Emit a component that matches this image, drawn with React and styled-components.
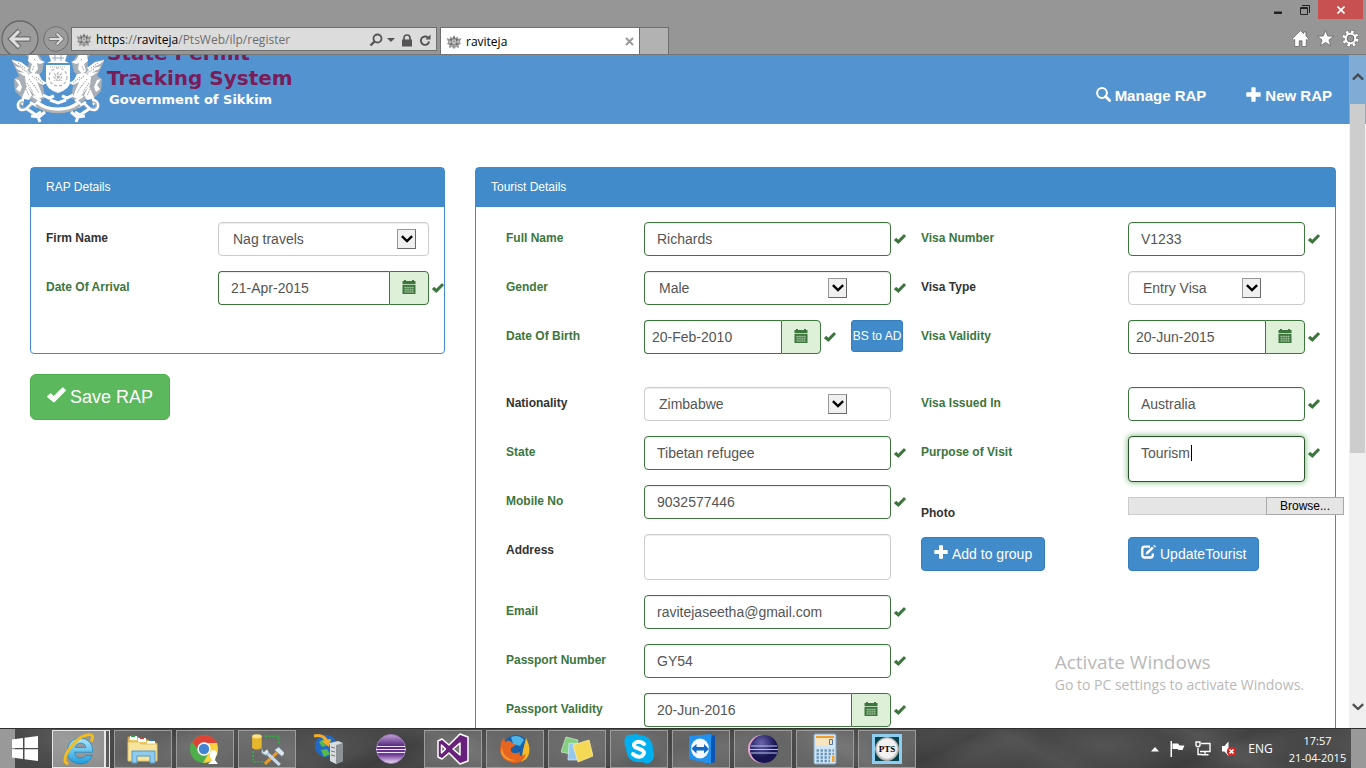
import React from "react";
import styled, { createGlobalStyle, css } from "styled-components";

const GREEN = "#3c763d";
const BLUE = "#428bca";
const sans = '"Liberation Sans", Arial, sans-serif';
const ui = '"Open Sans", "Noto Sans", sans-serif';

const GlobalStyle = createGlobalStyle`
  *, *::before, *::after { box-sizing: border-box; }
  body { margin: 0; font: 14px/20px ${sans}; color: #333; background: #fff; overflow: hidden; }
  button, input, select, textarea { font: inherit; color: inherit; margin: 0; }
  svg { display: block; flex: none; }
`;

const Desktop = styled.div`
  position: relative;
  display: flex;
  flex-direction: column;
  height: 100vh;
`;

/* ---------- browser frame ---------- */

const Chrome = styled.header`
  background: #969696;
  border-bottom: 1px solid #777;
  font: 12px/16px ${ui};
  color: #000;
`;

const TitleBar = styled.div`
  display: flex;
  justify-content: flex-end;
  height: 20px;
  padding-right: 3px;
`;

const WindowButton = styled.button`
  display: flex;
  align-items: center;
  justify-content: center;
  width: ${(p) => (p.$close ? 45 : 27)}px;
  height: 19px;
  padding: 0;
  border: 0;
  background: ${(p) => (p.$close ? "#c75050" : "transparent")};
`;

const Toolbar = styled.div`
  display: flex;
  height: 34px;
  overflow: hidden;
`;

const NavButtons = styled.div`
  display: flex;
  gap: 4px;
  flex: none;
  width: 71px;
  padding-left: 1px;
`;

const PlainButton = styled.button`
  display: flex;
  align-items: center;
  justify-content: center;
  flex: none;
  height: ${(p) => p.$h || 16}px;
  padding: 0;
  border: 0;
  background: none;
`;

const AddressBar = styled.div`
  display: flex;
  align-items: center;
  gap: 4px;
  flex: 0 1 366px;
  height: 24px;
  margin-top: 7px;
  padding: 2px 5px 0 4px;
  background: #dcdcdc;
  border: 1px solid #6e6e6e;
`;

const Url = styled.span`
  flex: 1;
  white-space: nowrap;
  color: #6d6d6d;
  b { font-weight: 400; color: #000; }
`;

const Tab = styled.div`
  display: flex;
  align-items: center;
  gap: 4px;
  flex: 0 1 200px;
  height: 27px;
  margin: 7px 0 0 3px;
  padding: 1px 5px 0;
  background: #fff;
  border: 1px solid #6e6e6e;
  border-bottom: 0;
  span { flex: 1; }
`;

const NewTab = styled.button`
  width: 29px;
  height: 27px;
  margin-top: 7px;
  border: 1px solid #6e6e6e;
  border-width: 1px 1px 0 0;
  background: #b2b2b2;
`;

const Tools = styled.div`
  display: flex;
  align-items: center;
  gap: 8px;
  margin-left: auto;
  padding: 3px 7px 0 0;
`;

/* ---------- web page ---------- */

const Viewport = styled.div`
  flex: 1;
  min-height: 0;
  display: flex;
`;

const Page = styled.div`
  flex: 1;
  min-width: 0;
  overflow: hidden;
`;

const SiteHeader = styled.div`
  display: flex;
  align-items: flex-end;
  height: 69px;
  padding: 0 17px 0 12px;
  overflow: hidden;
  background: #5394d0;
  color: #fff;
`;

const Brand = styled.div`
  display: flex;
  align-items: flex-end;
  gap: 3px;
  flex: 1;
`;

const BrandText = styled.div`
  padding-bottom: 15px;
  font-family: "DejaVu Sans", Verdana, sans-serif;
  font-weight: 700;
`;

const BrandTitle = styled.div`
  width: 210px;
  font-size: 20px;
  line-height: 25px;
  color: #7a1c59;
`;

const BrandSub = styled.div`
  padding-left: 2px;
  font-size: 13px;
  line-height: 18px;
`;

const SiteNav = styled.nav`
  display: flex;
  gap: 40px;
  padding-bottom: 18px;
`;

const NavLink = styled.a`
  display: flex;
  align-items: center;
  gap: 4px;
  font-size: 15px;
  line-height: 20px;
  font-weight: 700;
  color: #fff;
  text-decoration: none;
  svg { margin-bottom: 4px; }
`;

const Columns = styled.main`
  display: grid;
  grid-template-columns: 415fr 861fr;
  gap: 30px;
  align-items: start;
  padding: 43px 13px 0 30px;
`;

const Panel = styled.section`
  border: 1px solid ${BLUE};
  border-radius: 4px;
  background: #fff;
`;

const PanelTitle = styled.h2`
  margin: 0;
  padding: 9px 15px 10px;
  font-size: 12px;
  line-height: 20px;
  font-weight: 400;
  color: #fff;
  background: ${BLUE};
`;

const Fields = styled.div`
  display: flex;
  flex-direction: column;
  gap: 15px;
  min-width: 0;
`;

const RapBody = styled.div`
  min-height: 146px;
  padding: 15px 0 15px 15px;
`;

const TouristBody = styled.div`
  display: grid;
  grid-template-columns: 400fr 399fr;
  gap: 15px;
  padding: 15px 15px 40px 30px;
`;

const Row = styled.div`
  display: grid;
  grid-template-columns: ${(p) => p.$cols};
  align-items: start;
  min-height: ${(p) => p.$min || 34}px;
`;

const Label = styled.label`
  padding-top: 8px;
  font-size: 12px;
  line-height: 17px;
  font-weight: 700;
  color: ${(p) => (p.$ok ? GREEN : "#333")};
`;

const box = css`
  width: 100%;
  border: 1px solid ${(p) => (p.$ok ? GREEN : "#ccc")};
  border-radius: 4px;
  background: #fff;
  box-shadow: inset 0 1px 1px rgba(0, 0, 0, 0.075);
  color: #555;
  font-size: 14px;
  line-height: 20px;
  outline: 0;
`;

const Input = styled.input`
  ${box}
  height: 34px;
  padding: 6px 12px;
`;

const TextArea = styled.textarea`
  ${box}
  display: block;
  height: 46px;
  padding: 6px 12px;
  resize: none;
  overflow: hidden;
  ${(p) =>
    p.$active &&
    css`
      border-color: #2b542c;
      box-shadow: inset 0 1px 1px rgba(0, 0, 0, 0.075), 0 0 6px #67b168;
    `}
`;

const Over = styled.div`
  position: relative;
`;

const Caret = styled.i`
  position: absolute;
  left: 63px;
  top: 9px;
  width: 1px;
  height: 16px;
  background: #000;
`;

const Select = styled.select`
  ${box}
  display: block;
  height: 34px;
  padding: 6px 14px;
  appearance: none;
`;

const Arrow = styled.span`
  position: absolute;
  top: 7px;
  right: ${(p) => p.$right}px;
  display: flex;
  justify-content: center;
  width: 19px;
  height: 20px;
  padding-top: 5px;
  background: #f0f0f0;
  border: 1px solid #999;
  border-right-color: #6a6a6a;
  border-bottom-color: #6a6a6a;
  pointer-events: none;
`;

const DateGroup = styled.div`
  display: flex;
  height: 34px;
`;

const DateInput = styled(Input)`
  flex: 1;
  min-width: 0;
  padding: 6px ${(p) => p.$pad}px;
  border-right: 0;
  border-radius: 4px 0 0 4px;
`;

const DateButton = styled.button`
  display: flex;
  align-items: center;
  justify-content: center;
  width: 40px;
  padding: 0 0 2px;
  border: 1px solid ${GREEN};
  border-radius: 0 4px 4px 0;
  background: #dff0d8;
`;

const Mark = styled.span`
  padding: 12px 0 0 3px;
`;

const Button = styled.button`
  display: inline-flex;
  align-items: center;
  justify-self: start;
  gap: 4px;
  height: 34px;
  padding: 0 12px;
  border: 1px solid #357ebd;
  border-radius: 4px;
  background: ${BLUE};
  color: #fff;
  font-size: 14px;
  line-height: 20px;
  white-space: nowrap;
  svg { margin-bottom: 4px; }
`;

const SmallButton = styled(Button)`
  justify-content: center;
  width: 52px;
  height: 32px;
  padding: 0;
  margin-left: 15px;
  font-size: 12px;
  border-radius: 3px;
`;

const SaveButton = styled(Button)`
  height: 46px;
  margin-top: 20px;
  padding: 0 16px;
  border-color: #4cae4c;
  border-radius: 6px;
  background: #5cb85c;
  font-size: 18px;
`;

const FilePicker = styled.label`
  display: flex;
  width: 216px;
  height: 18px;
  font-size: 12px;
  line-height: 16px;
  color: #000;
  input { position: absolute; width: 1px; height: 1px; opacity: 0; }
`;

const FileName = styled.span`
  flex: 1;
  background: #e5e5e5;
  border: 1px solid #ccc;
  border-right: 0;
`;

const FileBrowse = styled.span`
  width: 78px;
  text-align: center;
  background: #e5e5e5;
  border: 1px solid #a9a9a9;
`;

const Scrollbar = styled.div`
  display: flex;
  flex-direction: column;
  flex: none;
  width: 17px;
  background: linear-gradient(#80abd4 69px, #f0f0f0 69px);
`;

const ScrollButton = styled.button`
  display: flex;
  justify-content: center;
  align-items: center;
  flex: none;
  height: ${(p) => p.$h}px;
  padding: 0 0 ${(p) => p.$lift || 0}px;
  border: 0;
  background: none;
`;

const Thumb = styled.div`
  flex: 0 1 349px;
  margin: 0 1px auto;
  background: #cdcdcd;
`;

const Watermark = styled.div`
  position: absolute;
  right: 62px;
  bottom: 73px;
  font-family: ${ui};
  color: #b9b9b9;
  white-space: nowrap;
  div { font-size: 19px; line-height: 26px; }
  p { margin: 0; font-size: 14px; line-height: 20px; }
`;

/* ---------- taskbar ---------- */

const Taskbar = styled.footer`
  display: flex;
  align-items: center;
  gap: 4px;
  flex: none;
  height: 40px;
  color: #fff;
  font: 12px/17px ${ui};
  border-top: 1px solid #302e2f;
  background:
    linear-gradient(28deg, transparent 30%, rgba(255, 255, 255, 0.05) 46%, transparent 60%) 0 0 / 190px 40px,
    linear-gradient(155deg, transparent 38%, rgba(0, 0, 0, 0.14) 50%, transparent 62%) 0 0 / 270px 40px,
    radial-gradient(ellipse at 50% 40%, rgba(255, 255, 255, 0.07), transparent 70%) 0 0 / 130px 40px,
    #474747;
`;

const Start = styled.button`
  width: 48px;
  height: 39px;
  padding: 0 0 0 12px;
  border: 0;
  background: linear-gradient(90deg, #999 15px, transparent 15px);
`;

const Task = styled.button`
  display: flex;
  align-items: center;
  justify-content: center;
  flex: 0 1 58px;
  height: 38px;
  padding: 0;
  border: 1px solid ${(p) => (p.$state === "none" ? "transparent" : "#9c9c9c")};
  background: ${(p) => (p.$state === "none" ? "none" : "rgba(255,255,255,0.17)")};
  ${(p) =>
    p.$state === "active" &&
    css`
      border-color: #e6e6e6;
      background: linear-gradient(90deg, transparent 51px, #e6e6e6 51px, #e6e6e6 53px, #5a5a5a 53px),
        rgba(255, 255, 255, 0.4);
      padding-right: 5px;
    `}
`;

const Tray = styled.div`
  display: flex;
  align-items: center;
  gap: 10px;
  height: 39px;
  margin-left: auto;
`;

const Clock = styled.time`
  width: 67px;
  font-size: 11px;
  text-align: center;
  white-space: nowrap;
  span { display: block; }
`;

const Language = styled.span`
  width: 27px;
  font-size: 12px;
  text-align: center;
`;

const ShowDesktop = styled.button`
  width: 15px;
  height: 39px;
  padding: 0;
  border: 0;
  background: #999;
  margin-left: -10px;
`;

/* ---------- drawings ---------- */

const Tick = ({ size = 12, color = GREEN }) => (
  <svg width={size} height={(size * 10) / 12} viewBox="0 0 12 10">
    <path fill={color} d="M0 5.9 2 4.100Q2.400 3.900 2.800 4.200L4.300 5.700 9.500.4Q10 0 10.400.4L11.800 1.700Q12.100 2.100 11.700 2.500L4.900 9.500Q4.400 10 3.900 9.500L.2 6.400Z" />
  </svg>
);

const Plus = ({ size = 14 }) => (
  <svg width={size} height={size} viewBox="0 0 14 14">
    <path fill="#fff" d="M5 .7Q5 .3 5.4.3H8.6Q9 .3 9 .7V5H13.3Q13.7 5 13.7 5.400V8.600Q13.7 9 13.3 9H9V13.300Q9 13.700 8.600 13.700H5.400Q5 13.700 5 13.300V9H.7Q.3 9 .3 8.600V5.400Q.3 5 .7 5H5Z" />
  </svg>
);

const SearchIcon = () => (
  <svg width="15" height="15" viewBox="0 0 15 15" fill="none" stroke="#fff">
    <circle cx="6" cy="6" r="4.900" strokeWidth="2" />
    <path d="m9.600 9.600 4 4" strokeWidth="2.800" strokeLinecap="round" />
  </svg>
);

const EditIcon = () => (
  <svg width="15" height="14" viewBox="0 0 15 14">
    <path d="M9 1.700H3.600Q1.300 1.700 1.300 4V10Q1.300 12.500 3.600 12.500H9.400Q11.800 12.500 11.800 10V8.500" fill="none" stroke="#fff" strokeWidth="2.300" />
    <path d="M5.300 7 11 1.500 12.900 3.300 7 9 4.600 9.700ZM12.100.5 13 0Q14.900.6 14.900 1.900L14 2.600Z" fill="#fff" />
  </svg>
);

const CalendarIcon = () => (
  <svg width="14" height="14" viewBox="0 0 14 14">
    <path fill={GREEN} d="M2 0H4V1H10V0H12V1H13.500V4.300H.5V1H2ZM.5 5H13.500V14H.5Z" />
    <path stroke="#dff0d8" strokeWidth=".7" d="M2 7.500H12M2 9.800H12M2 12H12M3.800 6.500V13M6 6.500V13M8.200 6.500V13M10.400 6.500V13" opacity=".6" />
  </svg>
);

const Chevron = ({ up, color = "#000", w = 11 }) => (
  <svg width={w} height={(w * 7) / 11} viewBox="0 0 11 7">
    <path d={up ? "M.8 6 5.5 1.5 10.2 6" : "M.8 1 5.5 5.5 10.2 1"} fill="none" stroke={color} strokeWidth="2.200" />
  </svg>
);

const Favicon = () => (
  <svg width="16" height="16" viewBox="0 0 16 16">
    <path fill="#959595" d="M8 1 9.500 4 12 2.500 12.200 5 15.500 4 13.700 8 15 10 12.500 11 13 14 10 13 8 15 6 13 3 14 3.500 11 1 10 2.300 8 .5 4 3.800 5 4 2.500 6.500 4Z" />
    <path fill="#d0d0d0" d="M6.300 5.800H9.700V8.500L8 10.300 6.300 8.500ZM3.400 6.700H4.600V9H3.400ZM11.500 6.700H12.600V9H11.500ZM5 11.500H7V12.300H5ZM9 11.500H11V12.300H9Z" />
    <path fill="#5e5e5e" d="M7.400 2.800H8.600V4.800H7.400ZM7.500 6.600H8.500V8.200H7.500ZM4.500 5H6V6.500H4.500ZM10 5H11.500V6.500H10ZM4.500 9.500H6V11H4.500ZM10 9.500H11.500V11H10Z" />
  </svg>
);

const Griffin = (props) => (
  <g {...props}>
    <path fill="#a9afb6" d="M-1 4 10 8 16 13 17 3 14 0H27L32 8 30 17 24 22 31 31 33 43 22 48 14 40 10 43 3 36 2 24 7 21Z" />
    <path fill="#fff" d="M-1 5 9 7 17 13 15 15 4 9ZM3 11 14 14 18 18 15 19 5 14ZM6 17 15 18 18 22 12 21ZM17 0 25 0 28 5 33 7 28 9 25 8 26 14 22 19 18 16 20 9 16 6ZM19 18 27 19 30 25 35 28 31 30 25 27 28 34 31 42 26 44 19 36 14 30 13 22ZM3 24 7 25 10 32 8 37 4 34 7 30ZM15 31 20 40 17 45 12 44 11 51 8 48 11 40Z" />
    <path fill="none" stroke="#9f9f9f" strokeWidth="1" strokeDasharray="1.500 1" d="M6 8 14 14M10 14 17 18M22 4 24 6M20 21 26 26M17 24 23 32M15 28 21 37M22 30 27 38M24 22 31 28M22 11 20 16M14 34 17 41" />
    <path fill="none" stroke="#a9afb6" strokeWidth="3.400" d="M12 46Q6 46 7 52Q9 56 15 53L21 48" />
    <path fill="none" stroke="#fff" strokeWidth="2.400" d="M12 45Q5 45 6 52Q8 57 14 54L20 48M18 47 26 52M21 41 29 46" />
  </g>
);

const Emblem = () => (
  <svg width="92" height="69" viewBox="0 0 92 69">
    <Griffin />
    <Griffin transform="translate(92 0) scale(-1 1)" />
    <path fill="#fff" d="M37 0H55L53 6 57 8H35L39 6Z" />
    <path d="M40 3H52M43 0V6M49 0V6" stroke="#93a9bf" />
    <path fill="#fff" d="M34 10H58V27Q58 34 46 38Q34 34 34 27Z" />
    <g fill="none" stroke="#b3b3b3" strokeWidth="1.200">
      <circle cx="46" cy="22" r="9" strokeDasharray="3 2" />
      <circle cx="46" cy="22" r="3.500" strokeDasharray="1.500 1.500" />
      <path d="M38 12H54M46 17V27M41 22H51M42 18 50 26M50 18 42 26" strokeDasharray="1 1" />
    </g>
    <path fill="none" stroke="#fff" strokeWidth="5" d="M24 47Q31 55 46 55T68 47" />
    <path fill="none" stroke="#b2b2b2" strokeWidth="2.400" d="M24 50Q32 57 46 57T68 50" />
    <path fill="none" stroke="#fff" strokeWidth="3" d="M31 40 37 43 42 41M61 40 55 43 50 41M15 54 24 60 29 57M77 54 68 60 63 57M38 45 46 48 54 45" />
    <path fill="none" stroke="#fff" strokeWidth="3" d="M33 57 27 62 19 61M26 62 28 67M59 57 65 62 73 61M66 62 64 67" />
  </svg>
);

const circleArrow = (r, flip) => (
  <svg width={r * 2 + 1} height={r * 2 + 1} viewBox="0 0 38 38" transform={flip ? "scale(-1 1)" : undefined}>
    <circle cx="19" cy="19" r="18" fill="#9c9c9c" stroke="#686868" strokeWidth="1.300" />
    <path d="M18.500 10.500 10 19 18.500 27.500M11 19H29.500" fill="none" stroke="#6c6c6c" strokeWidth="5.400" />
    <path d="M18 11 10 19 18 27M11 19H28.500" fill="none" stroke="#dedede" strokeWidth="3" />
  </svg>
);

const Icon = ({ children, size = 32 }) => (
  <svg width={size} height={size} viewBox="0 0 32 32">{children}</svg>
);

const taskIcons = [
  ["Internet Explorer", "active", (
    <Icon size={34}>
      <defs><linearGradient id="ie" x2="0" y2="1"><stop stopColor="#aee8fb" /><stop offset="1" stopColor="#209cdc" /></linearGradient></defs>
      <path fill="url(#ie)" stroke="#1685c4" strokeWidth=".7" d="M29 19H12Q12 24 17 24.5Q21 24.5 22.500 22H28.500Q25.500 30 17 30Q5 29 5 18Q6 6 17 6Q29 6 29 19ZM12.500 14.500H22.500Q22 10.500 17.500 10.500Q13 11 12.500 14.500Z" />
      <path fill="none" stroke="#f5bd1b" strokeWidth="2.700" d="M6 30Q0 29 5 19Q14 4 25 2.500Q31 2 27.500 9" />
    </Icon>
  )],
  ["File Explorer", "on", (
    <Icon>
      <path fill="#e8c765" stroke="#c49b39" d="M1 4H11L13 7H22L24 10H30V28H1Z" />
      <path fill="#fff" d="M3 3H10V7H3ZM11 5H19V9H11ZM20 8H28V11H20Z" />
      <path fill="#20a540" d="M4 2H8V4H4Z" /><path fill="#d63a2a" d="M13 4H17V6H13Z" /><path fill="#2876bd" d="M22 6H26V8H22Z" />
      <path fill="#f8e39c" stroke="#d8b75c" strokeWidth=".7" d="M1 9H12L14 11H30V28H1Z" />
      <path fill="#8fcbee" stroke="#5697c4" d="M5 18H28V30H23V23H10V30H5Z" />
    </Icon>
  )],
  ["Chrome", "on", (
    <Icon>
      <circle cx="15" cy="16" r="14" fill="#4fae4c" />
      <path fill="#dd4437" d="M3 9Q8 2 15 2Q24 2 28 10H15L9 16Z" />
      <path fill="#fdd23e" d="M28 10Q32 24 20 29L14 30 21 18 18 10Z" />
      <circle cx="15" cy="16" r="6.700" fill="#fff" /><circle cx="15" cy="16" r="5.200" fill="#4285d5" />
      <path fill="#fff" d="M21 20A3.500 3.500 0 1 1 27 23L26 27 29 31H19L23 27 21 24Z" />
    </Icon>
  )],
  ["Database Tools", "on", (
    <Icon size={34}>
      <path fill="#e6b72c" d="M2 4H11V15Q6 18 2 15Z" /><ellipse cx="6.500" cy="4" rx="4.500" ry="2" fill="#ffe283" />
      <path d="M14 4H27V12M3 18V28H13" fill="none" stroke="#28b53a" strokeWidth="1.500" strokeDasharray="2 1.500" />
      <path d="M14 30 27 18" stroke="#e79a2c" strokeWidth="3" /><path d="m14 18 14 13" stroke="#c7d9e8" strokeWidth="3" />
      <path fill="#dbe7f1" stroke="#6f879b" strokeWidth=".7" d="M23 17 27 14 33 20 30 23ZM11 15 13 19 16 16 18 19 15 22 11 20Z" />
    </Icon>
  )],
  ["Web Server", "none", (
    <Icon>
      <circle cx="13" cy="13" r="11" fill="#2269c7" />
      <path fill="#59b84b" d="M6 9 12 5 18 7 15 12 9 14ZM8 17 14 16 17 21 11 24ZM19 9 23 12 22 17 19 15Z" />
      <path fill="none" stroke="#f3ac2c" strokeWidth="3" d="M1 3Q11 1 14 9" /><path fill="#f3ac2c" d="m9 8 9-2-2 8Z" />
      <path fill="#d9dcdf" d="m17 10 8-2 5 2V28l-7 3-6-3Z" /><path fill="#8c9298" d="m23 12 7-2V28l-7 3Z" />
      <path stroke="#777" d="m18 14 4 1M18 18l4 1M18 22l4 1" />
    </Icon>
  )],
  ["Eclipse", "none", (
    <Icon>
      <defs><linearGradient id="ec" x2="0" y2="1"><stop stopColor="#c0a0da" /><stop offset=".4" stopColor="#542779" /><stop offset=".7" stopColor="#6f3c98" /><stop offset="1" stopColor="#f3e7fa" /></linearGradient></defs>
      <circle cx="16" cy="16" r="14.500" fill="url(#ec)" stroke="#9d7cb8" />
      <path stroke="#f0e4f8" strokeWidth="1" d="M2 13.500H30M1 16.500H31M2 19.500H30" />
    </Icon>
  )],
  ["Visual Studio", "on", (
    <Icon>
      <path fill="#68217a" fillRule="evenodd" stroke="#fff" strokeWidth="1.500" strokeLinejoin="round" d="M23 1 31 4V28L23 31 12 20 5 26 1 24V8L5 6 12 12ZM23 10 16 16 23 22ZM4.500 12V20L8.500 16Z" />
    </Icon>
  )],
  ["Firefox", "on", (
    <Icon>
      <circle cx="17" cy="15" r="13" fill="#1761a8" /><path fill="#4fb3e4" d="M12 4Q20 1 25 7L21 13 14 11Z" />
      <path fill="#f6b928" d="M27 5Q34 18 27 26L22 29 24 17Z" />
      <path fill="#e66520" d="M2 9 5 5 6 9Q11 6 13 10L17 12 12 15Q11 21 18 20L21 19Q19 26 27 21Q24 31 14 30Q2 28 1 17Z" />
      <path fill="#f89a2b" d="M3 13Q3 26 17 27Q7 30 2 20Z" />
    </Icon>
  )],
  ["Sticky Notes", "on", (
    <Icon>
      <path fill="#84ce80" stroke="#d4edd2" strokeWidth=".7" d="m5 4 12 3-3 15L0 19Z" />
      <path fill="#97c9ef" stroke="#d7eaf9" strokeWidth=".7" d="m8 10 14 1-2 16H7Z" />
      <path fill="#f5d956" stroke="#fff3b0" strokeWidth=".7" d="m12 12 16-5 4 16-15 6Z" />
    </Icon>
  )],
  ["Skype", "on", (
    <Icon>
      <path fill="#00aff0" d="M9 2Q12 0 16 2Q30 3 30 17Q33 24 28 29Q24 32 20 29Q4 31 3 15Q-1 6 5 2Q7 1 9 2Z" />
      <path fill="none" stroke="#fff" strokeWidth="4" strokeLinecap="round" d="M21 11Q18 8 14 9Q9 11 12 14L19 17Q23 20 19 23Q14 25 10 21" />
    </Icon>
  )],
  ["TeamViewer", "on", (
    <Icon>
      <path fill="#0b55b5" d="m27 3 3-1V29l-6 2-3-1Z" /><path fill="#2091ef" d="M4 3 26 1V31L4 26Z" />
      <ellipse cx="15" cy="15.500" rx="9" ry="10" fill="#f5f9fd" />
      <path fill="#1467c2" d="m6.500 15.500 5-4.500V14H19V11l5 5-5 4.500V17.500H11.500v3Z" />
    </Icon>
  )],
  ["Eclipse IDE", "on", (
    <Icon>
      <defs><radialGradient id="luna" cx=".4" cy=".3"><stop stopColor="#6b68b2" /><stop offset="1" stopColor="#181551" /></radialGradient></defs>
      <circle cx="15" cy="16" r="14" fill="#e5a5cf" /><circle cx="17" cy="16" r="14" fill="url(#luna)" />
      <path stroke="#b9c6ee" strokeWidth="1" d="M4 13H30M3 16.500H31M4 20H30" />
    </Icon>
  )],
  ["Calculator", "on", (
    <Icon>
      <rect x="5" y="1" width="22" height="30" rx="1.500" fill="#d2e5f5" stroke="#82a9cc" />
      <path fill="#f39c2a" d="M7 3H25V5H7Z" /><path fill="#f9e4c0" d="M7 5H25V13H7Z" />
      <path fill="none" stroke="#5475a0" d="M20.500 6.500H23.500V11.500H20.500Z" />
      <path stroke="#6893bb" strokeWidth="2.400" strokeDasharray="2.400 1.600" d="M7.500 17.500H25M7.500 21H25M7.500 24.500H21M7.500 28H21" />
      <path fill="#f0a334" d="M23 23H25.500V29H23Z" />
    </Icon>
  )],
  ["PTS", "on", (
    <Icon>
      <rect x="1" y="1" width="30" height="30" fill="#8ecdf0" /><rect x="4" y="4" width="24" height="24" fill="#06434f" />
      <circle cx="16" cy="16" r="11.500" fill="#c9c9c9" stroke="#a8a8a8" /><circle cx="16" cy="15.500" r="10" fill="#f2f2f2" />
      <text x="16" y="18.500" fontFamily="Liberation Serif, serif" fontWeight="700" fontSize="9" textAnchor="middle">PTS</text>
    </Icon>
  )],
];

/* ---------- form pieces ---------- */

const WIDE = "138fr 247fr 15px";
const NARROW = "207fr 177fr 15px";
const RAP = "172fr 211fr 15px";
const NARROW_OPEN = "minmax(0, 207fr) minmax(0, 192fr)";

const Field = ({ id, label, ok, cols, min, children }) => (
  <Row $cols={cols} $min={min}>
    <Label htmlFor={id} $ok={ok}>{label}</Label>
    {children}
    {ok && <Mark><Tick /></Mark>}
  </Row>
);

const TextField = ({ value, ...rest }) => (
  <Field {...rest} ok>
    <Input id={rest.id} defaultValue={value} $ok />
  </Field>
);

const SelectField = ({ value, inset = 44, ...rest }) => (
  <Field {...rest}>
    <Over>
      <Select id={rest.id} $ok={rest.ok}><option>{value}</option></Select>
      <Arrow $right={inset}><Chevron w={12} /></Arrow>
    </Over>
  </Field>
);

const DatePicker = ({ id, value, pad = 12 }) => (
  <DateGroup>
    <DateInput id={id} defaultValue={value} $ok $pad={pad} />
    <DateButton type="button" aria-label="Pick a date"><CalendarIcon /></DateButton>
  </DateGroup>
);

export default function App() {
  return (
    <Desktop>
      <GlobalStyle />
      <Chrome>
        <TitleBar>
          <WindowButton aria-label="Minimize"><svg width="10" height="12" viewBox="0 0 10 12"><path fill="#222" d="M1 7.500H9V10H1Z" /></svg></WindowButton>
          <WindowButton aria-label="Restore"><svg width="10" height="10" viewBox="0 0 10 10"><path fill="none" stroke="#222" d="M.5 2.500H7.500V9.500H.5ZM.5 3.500H7.500M2 .5H9.500V8" /></svg></WindowButton>
          <WindowButton $close aria-label="Close"><svg width="8" height="8" viewBox="0 0 8 8"><path stroke="#fff" strokeWidth="1.700" d="m.5.5 7 7M7.500.5l-7 7" /></svg></WindowButton>
        </TitleBar>
        <Toolbar>
          <NavButtons>
            <PlainButton $h={38} aria-label="Back">{circleArrow(18.5)}</PlainButton>
            <PlainButton $h={38} aria-label="Forward">{circleArrow(12.5, true)}</PlainButton>
          </NavButtons>
          <AddressBar>
            <Favicon />
            <Url><b>https</b>://<b>raviteja</b>/PtsWeb/ilp/register</Url>
            <PlainButton aria-label="Search"><svg width="14" height="14" viewBox="0 0 14 14" fill="none" stroke="#555"><circle cx="8.500" cy="5.500" r="4" strokeWidth="1.800" /><path strokeWidth="2.400" d="m5.500 8.500-4 4" /></svg></PlainButton>
            <PlainButton aria-label="Show more"><svg width="8" height="4" viewBox="0 0 8 4"><path fill="#555" d="M0 0H8L4 4Z" /></svg></PlainButton>
            <PlainButton aria-label="Security"><svg width="16" height="13" viewBox="0 0 16 13"><path fill="#555" d="M3 5.500H13V12.500H3Z" /><path d="M5 6V4Q5 1 8 1T11 4V6" fill="none" stroke="#555" strokeWidth="1.700" /></svg></PlainButton>
            <PlainButton aria-label="Refresh"><svg width="12" height="13" viewBox="0 0 12 13"><path d="M9 3.600A4.200 4.200 0 1 0 10.200 7.500" fill="none" stroke="#555" strokeWidth="1.900" /><path fill="#555" d="M6.500 5.500H11.500V.5Z" /></svg></PlainButton>
          </AddressBar>
          <Tab>
            <Favicon />
            <span>raviteja</span>
            <PlainButton aria-label="Close tab"><svg width="9" height="9" viewBox="0 0 9 9"><path stroke="#999" strokeWidth="2" d="m1 1 7 7M8 1 1 8" /></svg></PlainButton>
          </Tab>
          <NewTab aria-label="New tab" />
          <Tools>
            <PlainButton aria-label="Home"><svg width="17" height="17" viewBox="0 0 17 17"><path fill="#fff" stroke="#666" strokeWidth=".8" strokeLinejoin="round" d="M8.500.6 11.500 3.600V2H14V6L16.700 8.800 15.300 10.200 14.300 9.500V16.500H10V10.800H7.200V16.500H2.700V9.500L1.700 10.200.3 8.800Z" /></svg></PlainButton>
            <PlainButton aria-label="Favorites"><svg width="17" height="17" viewBox="0 0 17 17"><path fill="#fff" stroke="#666" strokeWidth=".8" d="m8.500.4 2.200 5.600 6 .2-4.700 3.700 1.700 5.900-5.200-3.400-5.200 3.400 1.700-5.900L.3 6.200l6-.2Z" /></svg></PlainButton>
            <PlainButton aria-label="Settings"><svg width="17" height="17" viewBox="0 0 17 17" fill="none"><circle cx="8.500" cy="8.500" r="6.600" stroke="#666" strokeWidth="3.800" strokeDasharray="3.400 1.780" /><circle cx="8.500" cy="8.500" r="6.600" stroke="#fff" strokeWidth="3" strokeDasharray="2.500 2.680" strokeDashoffset="-.45" /><circle cx="8.500" cy="8.500" r="4.700" stroke="#fff" strokeWidth="2" /><circle cx="8.500" cy="8.500" r="3.300" stroke="#666" strokeWidth=".8" /></svg></PlainButton>
          </Tools>
        </Toolbar>
      </Chrome>

      <Viewport>
        <Page>
          <SiteHeader>
            <Brand>
              <Emblem />
              <BrandText>
                <BrandTitle>State Permit Tracking System</BrandTitle>
                <BrandSub>Government of Sikkim</BrandSub>
              </BrandText>
            </Brand>
            <SiteNav>
              <NavLink href="#manage"><SearchIcon />Manage RAP</NavLink>
              <NavLink href="#new"><Plus size={15} />New RAP</NavLink>
            </SiteNav>
          </SiteHeader>

          <Columns>
            <div>
              <Panel>
                <PanelTitle>RAP Details</PanelTitle>
                <RapBody>
                  <Fields>
                    <SelectField id="firm" label="Firm Name" cols={RAP} value="Nag travels" inset={13} />
                    <Field id="arrival" label="Date Of Arrival" cols={RAP} ok>
                      <DatePicker id="arrival" value="21-Apr-2015" />
                    </Field>
                  </Fields>
                </RapBody>
              </Panel>
              <SaveButton type="button"><Tick size={19} color="#fff" />Save RAP</SaveButton>
            </div>

            <Panel>
              <PanelTitle>Tourist Details</PanelTitle>
              <TouristBody>
                <Fields>
                  <TextField id="name" label="Full Name" cols={WIDE} value="Richards" />
                  <SelectField id="gender" label="Gender" cols={WIDE} ok value="Male" />
                  <Row $cols="138fr 177fr 15px 70px" $min={52}>
                    <Label htmlFor="dob" $ok>Date Of Birth</Label>
                    <DatePicker id="dob" value="20-Feb-2010" pad={7} />
                    <Mark><Tick /></Mark>
                    <SmallButton type="button">BS to AD</SmallButton>
                  </Row>
                  <SelectField id="nationality" label="Nationality" cols={WIDE} value="Zimbabwe" />
                  <TextField id="state" label="State" cols={WIDE} value="Tibetan refugee" />
                  <TextField id="mobile" label="Mobile No" cols={WIDE} value="9032577446" />
                  <Field id="address" label="Address" cols={WIDE}>
                    <TextArea id="address" />
                  </Field>
                  <TextField id="email" label="Email" cols={WIDE} value="ravitejaseetha@gmail.com" />
                  <TextField id="passport" label="Passport Number" cols={WIDE} value="GY54" />
                  <Field id="passport-validity" label="Passport Validity" cols={WIDE} ok>
                    <DatePicker id="passport-validity" value="20-Jun-2016" />
                  </Field>
                </Fields>

                <Fields>
                  <TextField id="visa" label="Visa Number" cols={NARROW} value="V1233" />
                  <SelectField id="visa-type" label="Visa Type" cols={NARROW} value="Entry Visa" />
                  <Field id="visa-validity" label="Visa Validity" cols={NARROW} min={52} ok>
                    <DatePicker id="visa-validity" value="20-Jun-2015" pad={7} />
                  </Field>
                  <TextField id="issued" label="Visa Issued In" cols={NARROW} value="Australia" />
                  <Field id="purpose" label="Purpose of Visit" cols={NARROW} ok>
                    <Over>
                      <TextArea id="purpose" defaultValue="Tourism" $ok $active />
                      <Caret />
                    </Over>
                  </Field>
                  <Row $cols={NARROW_OPEN} $min={25}>
                    <Label htmlFor="photo">Photo</Label>
                    <FilePicker>
                      <input id="photo" type="file" />
                      <FileName />
                      <FileBrowse>Browse...</FileBrowse>
                    </FilePicker>
                  </Row>
                  <Row $cols={NARROW_OPEN}>
                    <Button type="button"><Plus />Add to group</Button>
                    <Button type="button"><EditIcon />UpdateTourist</Button>
                  </Row>
                </Fields>
              </TouristBody>
            </Panel>
          </Columns>
        </Page>
        <Scrollbar>
          <ScrollButton $h={49} $lift={6} aria-label="Scroll up"><Chevron up color="#444b54" w={12} /></ScrollButton>
          <Thumb />
          <ScrollButton $h={43} aria-label="Scroll down"><Chevron color="#505050" w={12} /></ScrollButton>
        </Scrollbar>
      </Viewport>

      <Watermark>
        <div>Activate Windows</div>
        <p>Go to PC settings to activate Windows.</p>
      </Watermark>

      <Taskbar>
        <Start aria-label="Start">
          <svg width="26" height="25" viewBox="0 0 26 25"><path fill="#fff" d="M0 3.500 11 2V12H0ZM12.500 1.800 26 0V12H12.500ZM0 13.200H11V23L0 21.500ZM12.500 13.200H26V25L12.500 23.200Z" /></svg>
        </Start>
        {taskIcons.map(([name, state, icon]) => (
          <Task key={name} $state={state} aria-label={name}>{icon}</Task>
        ))}
        <Tray>
          <svg width="10" height="6" viewBox="0 0 10 6"><path fill="#fff" d="M1 5.500 5 1 9 5.500Z" /></svg>
          <svg width="15" height="16" viewBox="0 0 15 16"><path fill="#fff" d="M.5 0H2V16H.5ZM2.500 2.500H8L9.500 4.500H14.500L12.500 9H8.500L7.500 8H2.500Z" /></svg>
          <svg width="16" height="15" viewBox="0 0 16 15" fill="none" stroke="#fff" strokeWidth="1.400"><path d="M6 2.500H15V10.500H5M10 10.500V13.500M6.500 13.700H13.500M3 7V13.500H7M1 1V4.500Q3 7 5 4.500V1Z" /></svg>
          <svg width="16" height="16" viewBox="0 0 16 16"><path fill="#fff" d="M1 5H3.500L7.500.5V15L3.500 10.500H1Z" /><circle cx="10.500" cy="10.500" r="4.700" fill="#d9251d" /><path stroke="#fff" strokeWidth="1.700" d="m8.500 8.500 4 4M12.500 8.500l-4 4" /></svg>
          <Language>ENG</Language>
          <Clock><span>17:57</span><span>21-04-2015</span></Clock>
          <ShowDesktop aria-label="Show desktop" />
        </Tray>
      </Taskbar>
    </Desktop>
  );
}
